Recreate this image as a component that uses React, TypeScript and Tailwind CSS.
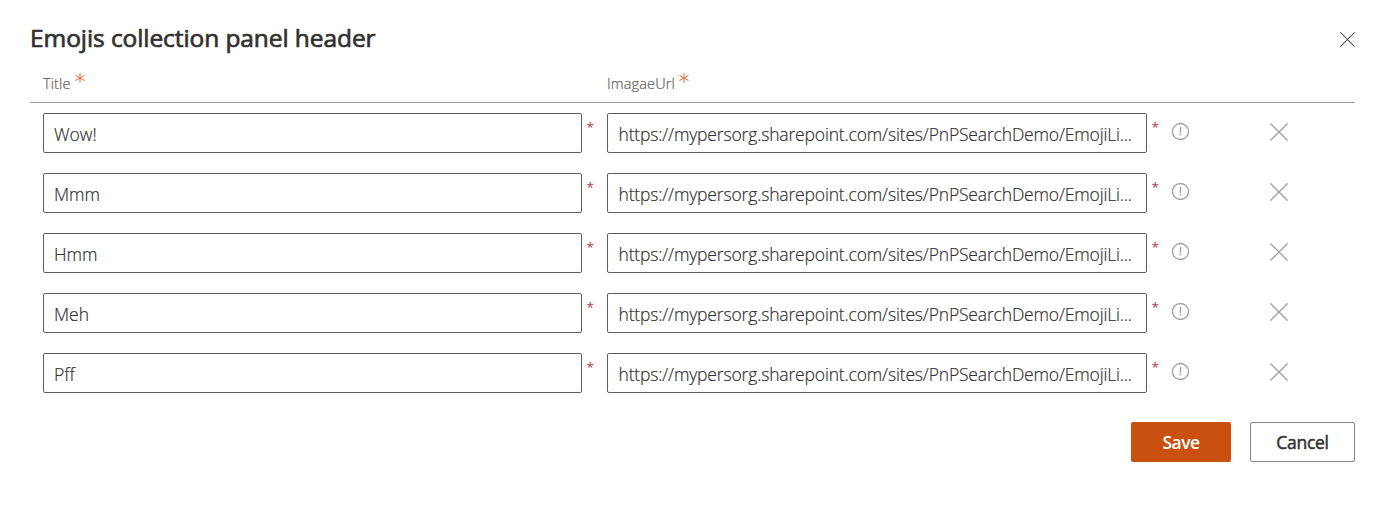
const URL_TEXT = "https://mypersorg.sharepoint.com/sites/PnPSearchDemo/EmojiLi...";
const titles = ["Wow!", "Mmm", "Hmm", "Meh", "Pff"];

function HeaderMark() {
  return (
    <svg className="mt-[4px] h-[10px] w-[10px] shrink-0" viewBox="0 0 10 10" fill="none" stroke="#e8693a" strokeWidth="1">
      <path d="M5 .2v9.6M.5 2.4l9 5.2M.5 7.6l9-5.2" />
    </svg>
  );
}

function Cross({ className, size }: { className: string; size: number }) {
  return (
    <svg className={className} width={size} height={size} viewBox="0 0 18 18" fill="none" stroke="currentColor" strokeWidth="1.3">
      <path d="M.4.4l17.2 17.2M17.6.4L.4 17.6" />
    </svg>
  );
}

function RequiredMark() {
  return <span className="w-[25px] shrink-0 pl-[4.5px] pt-[4px] text-[13.5px] leading-5 text-[#b3383b]">*</span>;
}

function Row({ title }: { title: string }) {
  return (
    <div className="flex h-[60px] items-start pl-[13px] pt-[10px]">
      <div className="flex h-10 w-[539px] shrink-0 items-center rounded-[2px] border border-[#605e5c] pl-[10px] pt-[1px]">
        <span className="whitespace-nowrap text-[17.5px] font-light leading-6 [-webkit-text-stroke:0.2px]">{title}</span>
      </div>
      <RequiredMark />
      <div className="flex h-10 w-[540px] shrink-0 items-center rounded-[2px] border border-[#605e5c] pl-[10.5px] pt-[1px]">
        <span className="whitespace-nowrap text-[17.5px] font-light leading-6 tracking-[-0.16px] [-webkit-text-stroke:0.2px]">{URL_TEXT}</span>
      </div>
      <RequiredMark />
      <svg className="mt-[9px] h-[18px] w-[18px] shrink-0" viewBox="0 0 18 18" fill="none" stroke="#a19f9d" strokeWidth="1.3">
        <circle cx="8.5" cy="9.5" r="8" />
        <path d="M8.5 5v6M8.5 12v1.5" />
      </svg>
      <Cross size={18} className="ml-[80px] mt-[10px] shrink-0 text-[#a19f9d]" />
    </div>
  );
}

export default function App() {
  return (
    <div className="h-[517px] w-[1383px] overflow-hidden bg-white pl-[30px] pr-[28px] font-['Open_Sans','Noto_Sans',sans-serif] text-[#323130]">
      <header className="flex h-[68px] items-start justify-between pt-[22px]">
        <h1 className="whitespace-nowrap text-[24.5px] font-normal leading-8 tracking-[-0.08px] [-webkit-text-stroke:0.7px]">Emojis collection panel header</h1>
        <Cross size={15} className="mt-[10px] text-[#605e5c]" />
      </header>
      <div className="flex h-[35px] border-b border-[#a19f9d] pl-[13px] text-[14.5px] font-light leading-5 text-[#605e5c] [-webkit-text-stroke:0.2px]">
        <div className="flex w-[564px] pt-[1px]">
          <span className="mt-[5px] w-[32px] tracking-[0.1px]">Title</span>
          <HeaderMark />
        </div>
        <div className="flex pt-[1px]">
          <span className="mt-[5px] w-[72px] tracking-[0.15px]">ImagaeUrl</span>
          <HeaderMark />
        </div>
      </div>
      <main>
        {titles.map((t) => (
          <Row key={t} title={t} />
        ))}
      </main>
      <footer className="flex justify-end gap-[19px] pt-[19px] text-[17.5px]">
        <button className="h-10 w-[100px] rounded-[2px] bg-[#ca5010] pt-px font-semibold tracking-[-0.5px] text-white">Save</button>
        <button className="h-10 w-[105px] rounded-[2px] border border-[#8a8886] pt-px font-normal tracking-[-0.3px] [-webkit-text-stroke:0.5px]">Cancel</button>
      </footer>
    </div>
  );
}
